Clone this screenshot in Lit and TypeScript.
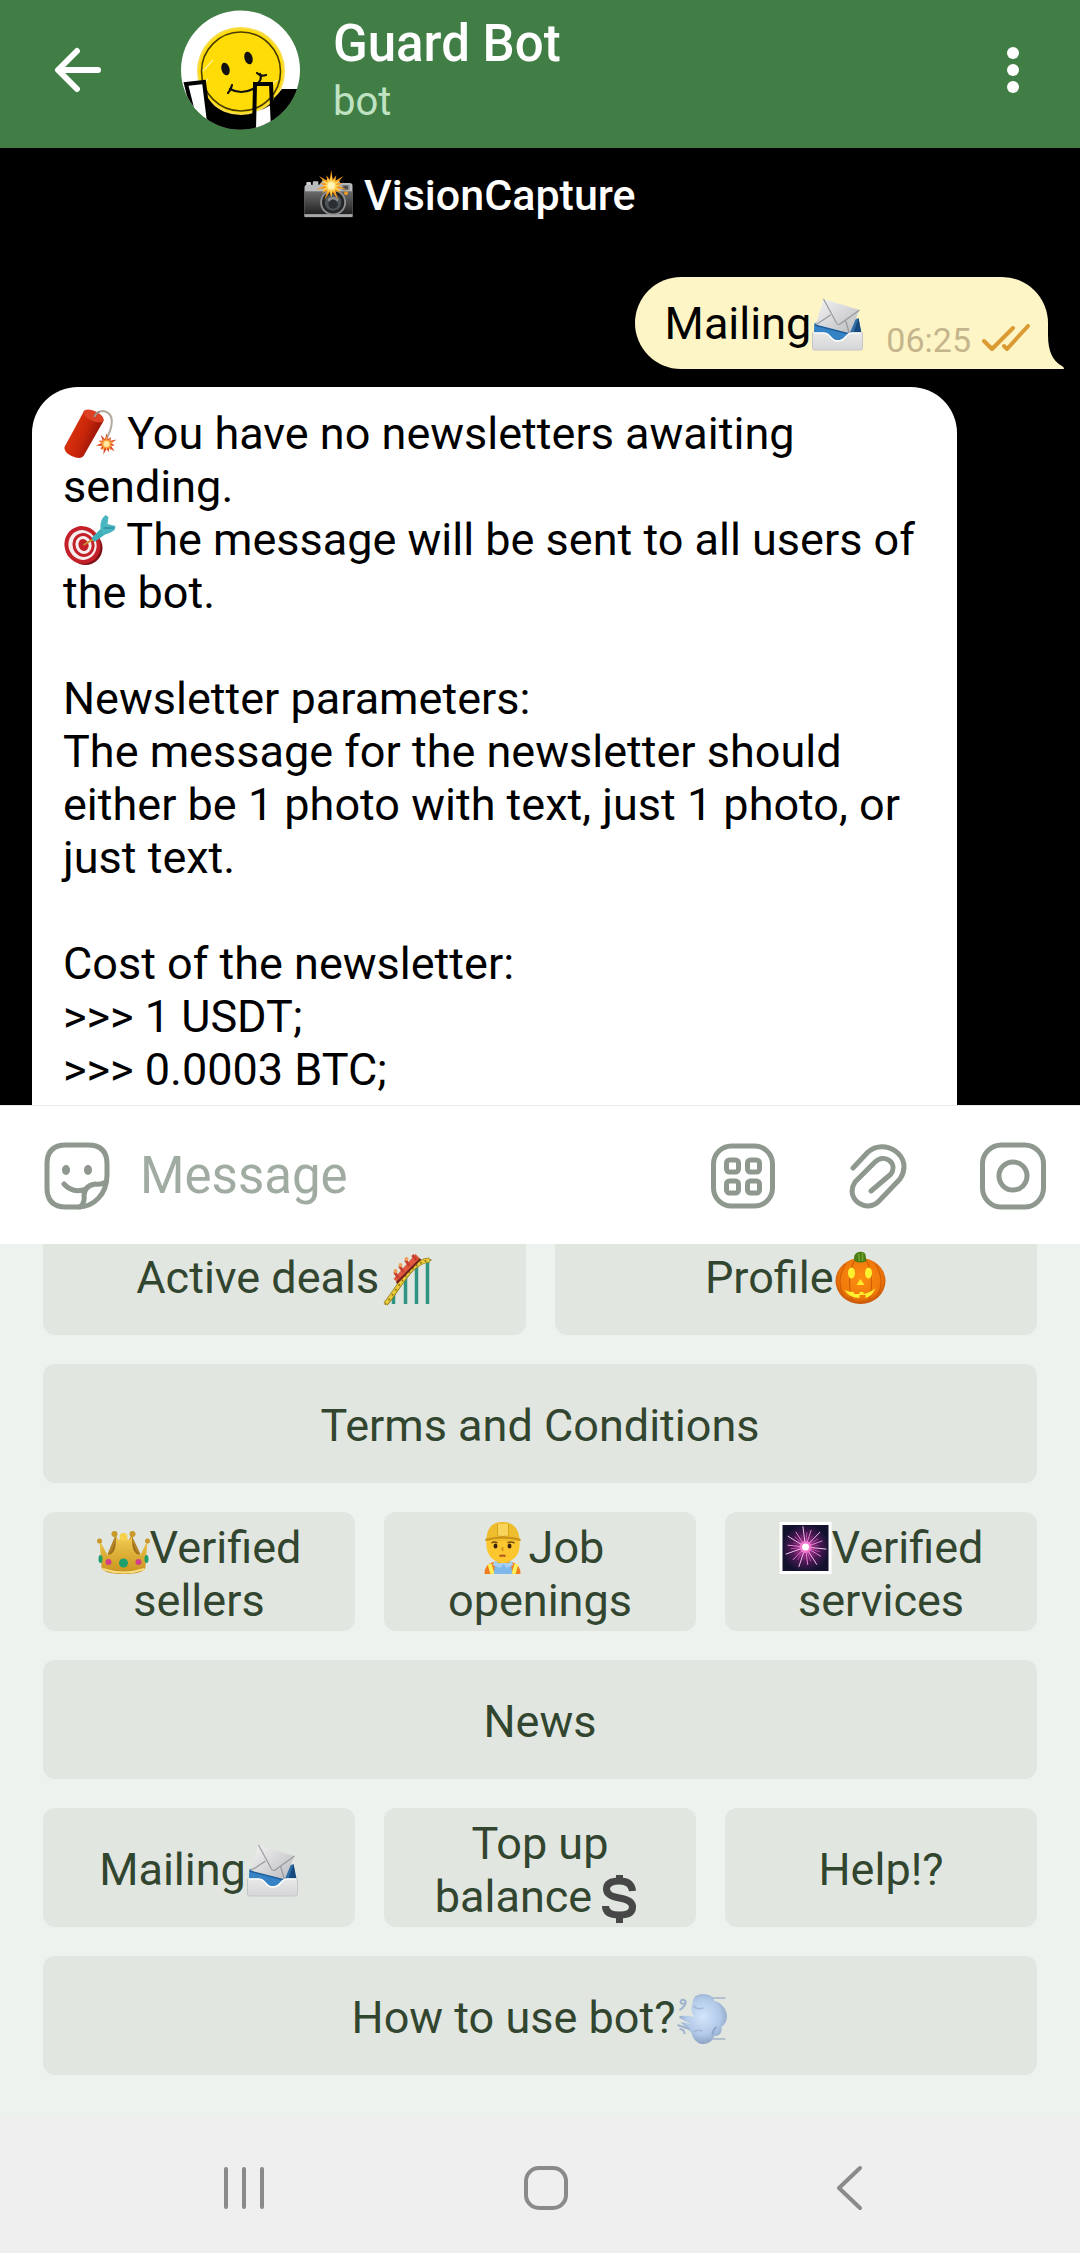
import { LitElement, html, css, svg, TemplateResult } from "lit";
import { customElement, property } from "lit/decorators.js";

type EmojiName =
  | "camera" | "envelope" | "firecracker" | "target" | "coaster" | "pumpkin"
  | "crown" | "worker" | "sparkler" | "dollar" | "dash";

const spikes = (cx: number, cy: number, outer: number, inner: number, count: number): string => {
  const points: string[] = [];
  for (let i = 0; i < count * 2; i++) {
    const r = i % 2 ? inner : outer * (i % 4 ? 0.75 : 1);
    const a = (Math.PI * i) / count - Math.PI / 2;
    points.push(`${(cx + r * Math.cos(a)).toFixed(1)},${(cy + r * Math.sin(a)).toFixed(1)}`);
  }
  return points.join(" ");
};

const rays = Array.from({ length: 28 }, (_, i) => {
  const a = (Math.PI * 2 * i) / 28 + 0.1;
  const r = [21, 15, 18, 13][i % 4];
  return { x: 26 + r * Math.cos(a), y: 25 + r * Math.sin(a), hue: ["#f3c3ee", "#c04aa8", "#e58ad2", "#93307f"][i % 4] };
});

const trackDots = Array.from({ length: 13 }, (_, i) => {
  const t = i / 12;
  const u = 1 - t;
  return {
    x: u * u * u * 4 + 3 * u * u * t * 19 + 3 * u * t * t * 28 + t * t * t * 49,
    y: u * u * u * 51 + 3 * u * u * t * 33 + 3 * u * t * t * 9 + t * t * t * 7,
  };
});

const EMOJI: Record<EmojiName, { label: string; art: TemplateResult }> = {
  camera: {
    label: "Camera with flash",
    art: svg`
      <defs><linearGradient id="cb" x1="0" y1="0" x2="0" y2="1"><stop offset="0" stop-color="#6b6b6b"/><stop offset="1" stop-color="#202020"/></linearGradient></defs>
      <rect x="2" y="12" width="5" height="5" rx="1" fill="#cfcfcf"/><rect x="9" y="11" width="6" height="6" rx="1" fill="#bdbdbd"/>
      <path d="M0 18Q0 15 3 15H16L20 10H36L39 13H49Q52 13 52 16V49H0Z" fill="#b9babb"/>
      <rect x="0" y="22" width="52" height="25" fill="url(#cb)"/>
      <rect x="0" y="47" width="52" height="3" fill="#a5a6a8"/>
      <rect x="40" y="15" width="9" height="6" fill="#8f9192"/><rect x="42" y="16" width="5" height="4" fill="#4a4d50"/>
      <circle cx="31" cy="34" r="14" fill="#8e9092"/><circle cx="31" cy="34" r="12" fill="#232527"/>
      <circle cx="31" cy="34" r="9" fill="#4d5357"/><ellipse cx="31" cy="31" rx="6" ry="3" fill="#858b90"/><circle cx="31" cy="36" r="5" fill="#2b2f33"/>
      <circle cx="45" cy="24" r="2" fill="#f29b20"/>
      <polygon points="${spikes(29, 16, 17, 7, 14)}" fill="#f59a1b"/>
      <polygon points="${spikes(29, 16, 12, 5, 12)}" fill="#ffd75a"/><circle cx="29" cy="16" r="4" fill="#fff3b8"/>`,
  },
  envelope: {
    label: "Incoming envelope",
    art: svg`
      <defs>
        <linearGradient id="ep" x1="0" y1="0" x2="1" y2="1"><stop offset="0" stop-color="#f4f4f4"/><stop offset="1" stop-color="#b9babe"/></linearGradient>
        <linearGradient id="et" x1="0" y1="0" x2="0" y2="1"><stop offset="0" stop-color="#e8e8e8"/><stop offset="1" stop-color="#d6d6d9"/></linearGradient>
      </defs>
      <path d="M4 25L8 22H42L47 20L50 37H2Z" fill="#2d6da6"/><path d="M47 20L50 35H42Z" fill="#174a7c"/>
      <path d="M3 25L40 36V42H2Z" fill="#3583c4"/>
      <path d="M12 1L48 12L38 36L4 27Z" fill="url(#ep)"/>
      <path d="M12 1L25 25Q27 28 30 25L48 12M4 27L19 17M38 36L34 22" fill="none" stroke="#989a9f" stroke-width="1.2"/>
      <path d="M3 27L38 36" stroke="#1f5f9c" stroke-width="1.5"/>
      <path d="M1 35H12Q16 35 19 39Q22 43 26 43Q31 43 34 39Q37 35 41 35H51V50Q51 52 49 52H3Q1 52 1 50Z" fill="url(#et)" stroke="#c5c6c9" stroke-width="1"/>
      <path d="M2 35H12Q16 35 19 39Q22 43 26 43Q31 43 34 39Q37 35 41 35H50" fill="none" stroke="#ffffff" stroke-width="1.5"/>`,
  },
  firecracker: {
    label: "Firecracker",
    art: svg`
      <defs><linearGradient id="fc" x1="0" y1="0" x2="1" y2=".45"><stop offset="0" stop-color="#7d1208"/><stop offset=".35" stop-color="#d6300c"/><stop offset=".6" stop-color="#c8260a"/><stop offset="1" stop-color="#8a0f08"/></linearGradient></defs>
      <path d="M31 8Q34 3 40 3Q50 5 48 17Q47 24 42 32" fill="none" stroke="#b4aca0" stroke-width="2"/>
      <path d="M20 4Q23 0 32 4Q41 9 40 13L20 48Q17 52 8 48Q0 44 1 39Z" fill="url(#fc)"/>
      <ellipse cx="30" cy="8" rx="11" ry="5" transform="rotate(25 30 8)" fill="#dc3f22"/>
      <path d="M31 9Q32 5 36 4" fill="none" stroke="#9c9488" stroke-width="2"/>
      <polygon points="${spikes(43, 36, 11, 5, 11)}" fill="#dd4526"/><polygon points="${spikes(43, 36, 8, 4, 10)}" fill="#f9a13a"/><circle cx="43" cy="36" r="3" fill="#ffe9a0"/>`,
  },
  target: {
    label: "Direct hit",
    art: svg`
      <ellipse cx="22" cy="34" rx="17" ry="17" fill="#7c1015"/>
      <ellipse cx="19" cy="31" rx="18" ry="19" transform="rotate(-20 19 31)" fill="#c3202a"/>
      <ellipse cx="19" cy="31" rx="14" ry="15" transform="rotate(-20 19 31)" fill="#f6eeee"/>
      <ellipse cx="20" cy="31" rx="11" ry="12" transform="rotate(-20 20 31)" fill="#c3202a"/>
      <ellipse cx="20" cy="31" rx="8" ry="9" transform="rotate(-20 20 31)" fill="#f6eeee"/>
      <ellipse cx="20" cy="31" rx="5" ry="6" transform="rotate(-20 20 31)" fill="#c3202a"/>
      <path d="M20 31L30 25" stroke="#c98d2b" stroke-width="2"/>
      <path d="M28 24L41 11L45 18L31 28Z" fill="#3fb0b8"/><path d="M37 15Q36 6 42 1L45 3L44 10L52 12L51 16Q45 21 39 20Z" fill="#49b6c2"/><path d="M40 14L51 14" stroke="#237f8d" stroke-width="1"/>`,
  },
  coaster: {
    label: "Roller coaster",
    art: svg`
      <g transform="translate(3 1)">
        <path d="M11 39V51M23 24V51M34 13V51M45 8V51" stroke="#2f9484" stroke-width="3.5"/>
        <path d="M3 51C18 33 27 9 47 7" fill="none" stroke="#8c7416" stroke-width="5"/>
        <path d="M3 51C18 33 27 9 47 7" fill="none" stroke="#eacb3c" stroke-width="3.5"/>
        ${trackDots.map((d) => svg`<circle cx=${d.x - 1} cy=${d.y} r="1" fill="#8c7416"/>`)}
        <path d="M11 26L33 1L38 6L16 30Z" fill="#e0583f"/><path d="M14 30L38 6" stroke="#6e2117" stroke-width="2"/>
        <path d="M12 19L16 25M17 13L21 19M23 7L27 13M30 2L34 7" stroke="#c8402f" stroke-width="3"/>
        <circle cx="13" cy="18" r="2" fill="#eda15a"/><circle cx="18" cy="12" r="2" fill="#eda15a"/><circle cx="24" cy="6" r="2" fill="#eda15a"/>
      </g>`,
  },
  pumpkin: {
    label: "Jack-o-lantern",
    art: svg`
      <defs><radialGradient id="pk" cx=".5" cy=".45" r=".6"><stop offset="0" stop-color="#fd8d12"/><stop offset=".7" stop-color="#f0790b"/><stop offset="1" stop-color="#b44303"/></radialGradient></defs>
      <ellipse cx="26" cy="29" rx="25" ry="23" fill="url(#pk)"/>
      <path d="M20 8Q11 28 18 50M32 8Q41 28 34 50M11 12Q1 28 9 44M41 12Q51 28 43 44" fill="none" stroke="#cf5f06" stroke-width="1.2"/>
      <path d="M20 9Q18 2 24 0Q30 -1 31 3L32 9Q26 12 20 9Z" fill="#4b7d16"/><path d="M24 2L25 9M28 1V9" stroke="#76a82e" stroke-width="1.5"/>
      <ellipse cx="17" cy="21" rx="3.5" ry="5.5" fill="#fff030"/><ellipse cx="34" cy="21" rx="3.5" ry="5.5" fill="#fff030"/>
      <path d="M26 27L30 33H22Z" fill="#ffea2b"/>
      <path d="M10 38Q14 40 19 40L20 42H25V40H29V42Q37 40 41 36Q38 44 31 46V43H25V46Q15 46 10 38Z" fill="#fff030"/>`,
  },
  crown: {
    label: "Crown",
    art: svg`
      <defs><linearGradient id="cr" x1="0" y1="0" x2="0" y2="1"><stop offset="0" stop-color="#f4cf55"/><stop offset="1" stop-color="#c8921c"/></linearGradient></defs>
      <path d="M10 32L18 13L26 28L34 13L43 32Z" fill="#b5852a"/>
      <path d="M2 18L10 33Q17 30 18 13Q21 23 26 12Q31 23 35 13Q36 30 43 33L50 18L48 45Q47 52 26 52Q5 52 4 45Z" fill="url(#cr)"/>
      <path d="M18 13Q17 29 10 33Q20 32 18 13M35 13Q36 29 43 33Q33 32 35 13" fill="#9b6c19"/>
      <circle cx="26" cy="15" r="4" fill="#f7d04c"/><circle cx="17" cy="12" r="3" fill="#c99a2a"/><circle cx="35" cy="12" r="3" fill="#c99a2a"/>
      <circle cx="2" cy="19" r="2.5" fill="#c99a2a"/><circle cx="50" cy="19" r="2.5" fill="#c99a2a"/>
      <path d="M5 47Q26 54 47 47" fill="none" stroke="#f7df86" stroke-width="2"/>
      <circle cx="26" cy="41" r="4.5" fill="#1e9f6c"/><circle cx="11" cy="40" r="3" fill="#d33f86"/><circle cx="41" cy="40" r="3" fill="#d33f86"/>
      <ellipse cx="3" cy="37" rx="2" ry="4" fill="#1e9f6c"/><ellipse cx="49" cy="37" rx="2" ry="4" fill="#1e9f6c"/>`,
  },
  worker: {
    label: "Construction worker",
    art: svg`
      <path d="M8 52Q8 42 17 40H35Q44 42 44 52Z" fill="#f07c1d"/>
      <path d="M19 40H34L36 52H17Z" fill="#7fb7ea"/><path d="M13 42L16 52M40 42L37 52" stroke="#fff05a" stroke-width="4"/>
      <path d="M19 38L16 43L24 46L27 42L30 46L37 43L34 38Z" fill="#a6cff2"/>
      <rect x="21" y="32" width="12" height="9" fill="#e5a51d"/>
      <path d="M10 18H43Q44 30 39 35Q33 41 27 41Q20 41 14 35Q9 29 10 18Z" fill="#fcc72e"/>
      <path d="M15 21Q18 19 21 21M31 21Q34 19 38 21" fill="none" stroke="#754c12" stroke-width="1.5"/>
      <ellipse cx="19" cy="24" rx="2" ry="2.5" fill="#3a2410"/><ellipse cx="33" cy="24" rx="2" ry="2.5" fill="#3a2410"/>
      <path d="M26 25V29" stroke="#d4941a" stroke-width="2"/><path d="M23 34Q26 33 29 34" fill="none" stroke="#b0561a" stroke-width="2"/>
      <path d="M10 16Q11 0 26 0Q41 0 43 16L44 19H9Z" fill="#eebd2e"/>
      <path d="M21 2V14Q26 15 32 14V2" fill="#f8d45a" stroke="#d9a51c" stroke-width="1"/><path d="M9 18Q26 13 44 18" fill="none" stroke="#c98f14" stroke-width="2"/>`,
  },
  sparkler: {
    label: "Fireworks",
    art: svg`
      <defs><radialGradient id="sp" cx=".5" cy=".5" r=".55"><stop offset="0" stop-color="#d63fa8"/><stop offset=".5" stop-color="#571a5c"/><stop offset="1" stop-color="#11112e"/></radialGradient></defs>
      <rect x="0" y="0" width="52" height="52" fill="#ffffff"/><rect x="3" y="3" width="46" height="46" fill="#13132f"/><rect x="4" y="4" width="44" height="44" fill="url(#sp)"/>
      ${rays.map((r) => svg`<line x1="26" y1="25" x2=${r.x} y2=${r.y} stroke=${r.hue} stroke-width="1"/>`)}
      <circle cx="26" cy="25" r="6" fill="#f477cf"/><circle cx="26" cy="25" r="3.5" fill="#ffffff"/>`,
  },
  dollar: {
    label: "Dollar sign",
    art: svg`
      <path d="M40 20Q39 10 27 10Q14 10 14 18Q14 25 27 27Q40 29 40 36Q40 44 27 44Q13 44 13 35" fill="none" stroke="#474747" stroke-width="7"/>
      <path d="M27 4V10M27 43V52" stroke="#474747" stroke-width="7"/>`,
  },
  dash: {
    label: "Dashing away",
    art: svg`
      <defs><radialGradient id="da" cx=".5" cy=".45" r=".6"><stop offset="0" stop-color="#d3e5fa"/><stop offset=".6" stop-color="#b2c9e8"/><stop offset="1" stop-color="#8297ba"/></radialGradient></defs>
      <g transform="translate(1 1)">
        <path d="M34 5H49M36 46H49" stroke="#a6b4c9" stroke-width="1.5"/>
        <path d="M3 23Q10 22 18 24Q13 17 16 11Q16 1 26 1Q36 1 38 8Q47 10 50 20Q52 29 45 34Q46 43 38 43Q34 52 25 51Q17 49 15 40L4 29L14 31L3 25Z" fill="url(#da)"/>
        <path d="M36 42Q36 37 40 34" fill="none" stroke="#91a7c9" stroke-width="2"/>
        <path d="M17 13Q20 17 27 15M17 39Q21 36 26 38" fill="none" stroke="#a3b8d8" stroke-width="1.5"/>
        <path d="M3 17Q10 13 9 8Q5 5 4 9Q5 12 8 10M1 32L13 36M3 36Q8 36 8 41" fill="none" stroke="#9fb2ce" stroke-width="2"/>
      </g>`,
  },
};

@customElement("emoji-glyph")
export class EmojiGlyph extends LitElement {
  @property() name: EmojiName = "envelope";

  static styles = css`
    :host { display: inline-block; width: 53px; height: 52px; vertical-align: -11px; }
    .art { display: block; width: 100%; height: 100%; overflow: visible; }
  `;

  render() {
    const { label, art } = EMOJI[this.name];
    return html`<svg class="art" viewBox="0 0 52 52" role="img" aria-label=${label}>${art}</svg>`;
  }
}

const emoji = (name: EmojiName) => html`<emoji-glyph name=${name}></emoji-glyph>`;

@customElement("reply-keyboard")
export class ReplyKeyboard extends LitElement {
  private rows: TemplateResult[][] = [
    [html`Active deals${emoji("coaster")}`, html`Profile${emoji("pumpkin")}`],
    [html`Terms and Conditions`],
    [html`${emoji("crown")}Verified sellers`, html`${emoji("worker")}Job openings`, html`${emoji("sparkler")}Verified services`],
    [html`News`],
    [html`Mailing${emoji("envelope")}`, html`Top up balance${emoji("dollar")}`, html`Help!?`],
    [html`How to use bot?${emoji("dash")}`],
  ];

  static styles = css`
    :host { display: block; background: #edf2ee; }
    .keys { display: flex; flex-direction: column; gap: 29px; padding: 0 43px 42px; }
    .row { display: flex; gap: 29px; }
    .key {
      flex: 1 1 0; min-width: 0; min-height: 119px; box-sizing: border-box;
      border: 0; border-radius: 12px; padding: 4px 32px 0;
      background: #e1e6e0; color: #32452f;
      font: 400 45px/53px Roboto, sans-serif; text-align: center;
    }
  `;

  render() {
    return html`<div class="keys">
      ${this.rows.map((row) => html`<div class="row">${row.map((label) => html`<button class="key" type="button"><span>${label}</span></button>`)}</div>`)}
    </div>`;
  }
}

@customElement("app-root")
export class AppRoot extends LitElement {
  static styles = css`
    :host {
      display: flex; flex-direction: column; min-height: 100vh;
      font-family: Roboto, sans-serif; font-size: 45px; line-height: 53px;
      background: #000000; color: #000000;
    }
    .icon-button {
      display: flex; align-items: center; justify-content: center; flex: none;
      width: 66px; height: 68px; border: 0; padding: 0; background: none; color: inherit;
    }
    .icon { display: block; fill: none; stroke: currentColor; stroke-linecap: round; stroke-linejoin: round; }

    .header { display: flex; align-items: center; padding: 10px 34px 18px 45px; background: #417e46; color: #ffffff; }
    .avatar { flex: none; width: 120px; height: 120px; margin-left: 70px; }
    .peer { flex: 1; min-width: 0; display: flex; flex-direction: column; gap: 4px; padding-left: 32px; }
    .peer-name { margin: 0; font-size: 51px; line-height: 60px; font-weight: 500; }
    .peer-kind { margin: 0; font-size: 40px; line-height: 48px; color: #bfe3c2; }

    .chat { flex: 1; display: flex; flex-direction: column; padding: 22px 16px 0 32px; }
    .watermark {
      margin: 0 156px 57px 0; text-align: center;
      font-size: 43px; line-height: 50px; font-weight: 500; color: #ffffff;
    }
    .watermark emoji-glyph { width: 49px; height: 48px; vertical-align: -9px; }
    .outgoing {
      position: relative; align-self: flex-end; display: flex; align-items: flex-end;
      margin-right: 16px; padding: 20px 18px 9px 30px;
      border-radius: 46px 46px 0 46px; background: #fef5c7;
    }
    .outgoing-text { margin: 0 22px 10px 0; }
    .tail { position: absolute; left: 100%; bottom: 0; width: 16px; height: 34px; fill: #fef5c7; }
    .stamp { margin-right: 11px; font-size: 34px; line-height: 40px; color: #c5b58d; }
    .ticks { margin-bottom: 8px; color: #dc9a33; }
    .incoming {
      flex: 1; box-sizing: border-box; margin: 18px 107px 0 0; padding: 20px 31px 9px;
      border-radius: 46px 46px 0 0; background: #ffffff;
    }
    .paragraph { margin: 0 0 53px; }
    .paragraph:last-child { margin-bottom: 0; }

    .composer {
      position: relative; z-index: 1; display: flex; align-items: center; gap: 69px;
      padding: 36px 34px 34px 44px;
      background: #ffffff; color: #8e988e; box-shadow: 0 -1px 0 #e9ebe9;
    }
    .entry { flex: 1; min-width: 0; display: flex; align-items: center; gap: 30px; }
    .field {
      flex: 1; min-width: 0; border: 0; padding: 0; outline: 0; background: none;
      font: 400 51px/60px Roboto, sans-serif; color: #000000;
    }
    .field::placeholder { color: #a0aba1; opacity: 1; }
    .keyboard { margin-top: -28px; }

    .system-nav { display: grid; grid-template-columns: repeat(3, 1fr); padding: 37px 80px 31px 93px; background: #efefef; color: #8a8a8a; }
    .system-nav .icon-button { justify-self: center; }
  `;

  private renderAvatar() {
    return html`<svg class="avatar" viewBox="0 0 120 120" role="img" aria-label="Guard Bot avatar">
      <defs><clipPath id="round"><circle cx="59.5" cy="60" r="59.5"/></clipPath></defs>
      <g clip-path="url(#round)">
        <rect width="120" height="120" fill="#ffffff"/>
        <path d="M24 84L40 98H76L88 92L101 79H120V120H24Z" fill="#000000"/>
        <circle cx="60" cy="61" r="44" fill="#f8dc45"/>
        <circle cx="60" cy="61" r="42" fill="#ffdc05"/>
        <circle cx="60" cy="61.5" r="39.5" fill="none" stroke="#4a3c05" stroke-width="1.6"/>
        <path d="M22 61L32 50M22 74L27 69M88 77L96 70" stroke="#fff09a" stroke-width="1.2"/>
        <ellipse cx="44.5" cy="59" rx="4" ry="6.5" transform="rotate(-17 44.5 59)" fill="#111111"/>
        <ellipse cx="67.5" cy="48" rx="4" ry="6.5" transform="rotate(-17 67.5 48)" fill="#111111"/>
        <path d="M51 75Q50 80 47 83M49 79Q60 85 72 79M78 72Q81 69 79 64M76 63Q80 67 85 65" fill="none" stroke="#111111" stroke-width="2.2" stroke-linecap="round"/>
        <path d="M93 88L102 79H120V120H90Z" fill="#000000"/>
        <path d="M27 88Q40 107 60 106Q68 106 73 103V120H28Z" fill="#000000"/>
        <path d="M5 73L22 71L28 120H18Z" fill="#ffffff"/>
        <path d="M29 120L23 72L5 74L11 98" fill="none" stroke="#000000" stroke-width="4"/>
        <path d="M74 102Q82 100 90 95V120H74Z" fill="#ffffff"/>
        <path d="M73 120L74 74H90L92 120" fill="none" stroke="#000000" stroke-width="4"/>
      </g>
    </svg>`;
  }

  render() {
    return html`
      <header class="header">
        <button class="icon-button" type="button" aria-label="Back">
          <svg class="icon" width="50" height="46" viewBox="0 0 50 46" stroke-width="6"><path d="M45 23H6M24 4L5 23L24 42"/></svg>
        </button>
        ${this.renderAvatar()}
        <div class="peer">
          <h1 class="peer-name">Guard Bot</h1>
          <p class="peer-kind">bot</p>
        </div>
        <button class="icon-button" type="button" aria-label="More options">
          <svg width="12" height="46" viewBox="0 0 12 46" fill="currentColor"><circle cx="6" cy="6" r="6"/><circle cx="6" cy="23" r="6"/><circle cx="6" cy="40" r="6"/></svg>
        </button>
      </header>

      <main class="chat">
        <p class="watermark">${emoji("camera")} VisionCapture</p>
        <section class="outgoing">
          <p class="outgoing-text">Mailing${emoji("envelope")}</p>
          <time class="stamp">06:25</time>
          <svg class="icon ticks" width="48" height="28" viewBox="0 0 48 28" stroke-width="4" role="img" aria-label="Read"><path d="M2 17L10 25L31 4M22 22L25 25L46 2"/></svg>
          <svg class="tail" viewBox="0 0 16 34" aria-hidden="true"><path d="M0 0Q0 24 14 31Q16 32 16 34H0Z"/></svg>
        </section>
        <section class="incoming">
          <p class="paragraph">${emoji("firecracker")} You have no newsletters awaiting sending.<br>${emoji("target")} The message will be sent to all users of the bot.</p>
          <p class="paragraph">Newsletter parameters:<br>The message for the newsletter should either be 1 photo with text, just 1 photo, or just text.</p>
          <p class="paragraph">Cost of the newsletter:<br>&gt;&gt;&gt; 1 USDT;<br>&gt;&gt;&gt; 0.0003 BTC;</p>
        </section>
      </main>

      <form class="composer" @submit=${(e: Event) => e.preventDefault()}>
        <div class="entry">
          <button class="icon-button" type="button" aria-label="Stickers">
            <svg class="icon" width="66" height="68" viewBox="0 0 66 68" stroke-width="5">
              <path d="M22 3H44Q63 3 63 22V33C63 52 50 65 34 65H22Q3 65 3 46V22Q3 3 22 3Z"/>
              <path d="M20 42Q29 52 42 47M62 40Q57 43 51 42Q40 44 40 54Q41 61 36 65"/>
              <ellipse cx="22" cy="28" rx="4" ry="5" fill="currentColor" stroke="none"/><ellipse cx="44" cy="28" rx="4" ry="5" fill="currentColor" stroke="none"/>
            </svg>
          </button>
          <input class="field" type="text" placeholder="Message" aria-label="Message">
        </div>
        <button class="icon-button" type="button" aria-label="Bot keyboard">
          <svg class="icon" width="64" height="66" viewBox="0 0 64 66" stroke-width="5">
            <rect x="2.5" y="3" width="59" height="60" rx="18"/>
            <rect x="15.5" y="17" width="12" height="12" rx="3"/><rect x="36.5" y="17" width="12" height="12" rx="3"/>
            <rect x="15.5" y="38" width="12" height="12" rx="3"/><rect x="36.5" y="38" width="12" height="12" rx="3"/>
          </svg>
        </button>
        <button class="icon-button" type="button" aria-label="Attach">
          <svg class="icon" width="58" height="66" viewBox="0 0 58 66" stroke-width="5">
            <path d="M4 25L19 9C35 -6 66 13 51 36L30 58C18 71 -5 56 6 39L26 19C36 10 49 20 42 31L22 48"/>
          </svg>
        </button>
        <button class="icon-button" type="button" aria-label="Camera">
          <svg class="icon" width="66" height="68" viewBox="0 0 66 68" stroke-width="5">
            <rect x="2.5" y="3" width="61" height="62" rx="19"/><circle cx="33" cy="34" r="14"/>
          </svg>
        </button>
      </form>

      <reply-keyboard class="keyboard"></reply-keyboard>

      <nav class="system-nav" aria-label="System navigation">
        <button class="icon-button" type="button" aria-label="Recent apps">
          <svg class="icon" width="42" height="44" viewBox="0 0 42 44" stroke-width="4"><path d="M3 3V41M21 3V41M39 3V41"/></svg>
        </button>
        <button class="icon-button" type="button" aria-label="Home">
          <svg class="icon" width="44" height="44" viewBox="0 0 44 44" stroke-width="4"><rect x="2" y="2" width="40" height="40" rx="13"/></svg>
        </button>
        <button class="icon-button" type="button" aria-label="Back">
          <svg class="icon" width="28" height="46" viewBox="0 0 28 46" stroke-width="4"><path d="M25 3L4 23L25 43"/></svg>
        </button>
      </nav>
    `;
  }
}
